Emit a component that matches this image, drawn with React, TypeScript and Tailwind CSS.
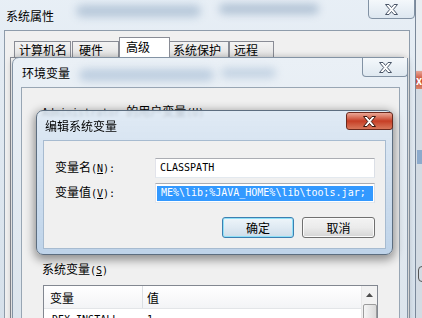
import React from "react";

function CloseX({ stroke = "#4a5668" }: { stroke?: string }) {
  return (
    <svg width="13" height="11" viewBox="0 0 13 11">
      <polygon
        points="0.5,0.5 4,0.5 6.5,3.5 9,0.5 12.5,0.5 8.3,5.5 12.5,10.5 9,10.5 6.5,7.5 4,10.5 0.5,10.5 4.7,5.5"
        fill="#ffffff"
        stroke={stroke}
        strokeWidth="1"
        strokeLinejoin="round"
      />
    </svg>
  );
}

export default function App() {
  return (
    <div className="relative w-[422px] h-[318px] overflow-hidden bg-[#dfe5eb] font-['Noto_Sans_CJK_SC',sans-serif] text-[12px] leading-[14px] text-black">
      {/* windows behind, at the right edge */}
      <div className="absolute left-[415px] top-0 w-[7px] h-[70px] bg-[#e9edf1]" />
      <div className="absolute left-[413px] top-[71px] w-[9px] h-[18px] bg-gradient-to-b from-[#e7a595] via-[#c8482f] to-[#d9866c] flex items-center">
        <span className="text-white text-[11px] font-bold leading-[11px] ml-[3px]">x</span>
      </div>
      <div className="absolute left-[415px] top-[89px] w-[7px] h-[229px] bg-[#d3dbe3] border-l border-[#9aa7b4]" />
      <div className="absolute left-[417px] top-[150px] w-[5px] h-[14px] bg-[#6d95c2] opacity-70" />
      <div className="absolute left-[418px] top-[266px] w-[8px] h-[16px] rounded-full border border-[#555]" />

      {/* 系统属性 window */}
      <div className="absolute left-[-2px] top-[-10px] w-[418px] h-[340px] rounded-t-[8px] border border-[#7a8899] bg-gradient-to-b from-[#e8eff6] to-[#d5e0ea] px-[5px] flex flex-col">
        <div className="relative h-[39px] shrink-0 pt-[18px] pl-[2px] flex items-start">
          <span>系统属性</span>
          <div className="absolute left-[72px] top-[14px] w-[125px] h-[12px] rounded-full bg-[#6f8fb1] opacity-40 blur-[4px]" />
          <div className="absolute left-[215px] top-[13px] w-[100px] h-[10px] rounded-full bg-[#5e7fa3] opacity-40 blur-[4px]" />
          <div className="absolute left-[364px] top-[8px] w-[47px] h-[20px] rounded-b-[4px] rounded-t-[1px] border border-[#8292a4] bg-gradient-to-b from-[#f4f8fb] to-[#dde7f0] flex items-center justify-center">
            <CloseX />
          </div>
        </div>
        <div className="flex-1 border border-[#8e9cab] bg-[#f0f0f0] flex flex-col pt-[6px] pl-[5px]">
          <div className="flex items-end h-[20px] pl-[4px] shrink-0">
            <div className="w-[57px] h-[16px] border border-b-0 border-[#898c95] bg-gradient-to-b from-[#f3f3f3] to-[#e2e2e2] flex items-center pl-[4px]">计算机名</div>
            <div className="ml-[1px] w-[47px] h-[16px] border border-b-0 border-[#898c95] bg-gradient-to-b from-[#f3f3f3] to-[#e2e2e2] flex items-center pl-[6px]">硬件</div>
            <div className="relative z-10 w-[51px] h-[20px] border border-b-0 border-[#898c95] bg-white flex items-start pt-[2px] pl-[6px]">高级</div>
            <div className="ml-[-2px] w-[61px] h-[16px] border border-b-0 border-[#898c95] bg-gradient-to-b from-[#f3f3f3] to-[#e2e2e2] flex items-center pl-[4px]">系统保护</div>
            <div className="w-[45px] h-[16px] border border-b-0 border-[#898c95] bg-gradient-to-b from-[#f3f3f3] to-[#e2e2e2] flex items-center pl-[4px]">远程</div>
          </div>
          <div className="flex-1 mr-[5px] border border-[#898c95] bg-[#fbfbfb]" />
        </div>
      </div>

      {/* 环境变量 window */}
      <div className="absolute left-[12px] top-[57px] w-[396px] h-[280px] rounded-t-[7px] border border-[#8393a4] bg-gradient-to-b from-[#eaf0f6] to-[#dbe4ec] pl-[8px] pr-[7px] flex flex-col shadow-[0_0_6px_rgba(0,0,0,0.25)]">
        <div className="relative h-[29px] shrink-0 pt-[8px] pl-[1px] flex items-start">
          <span>环境变量</span>
          <div className="absolute left-[58px] top-[11px] w-[135px] h-[12px] rounded-full bg-[#7b9cc0] opacity-40 blur-[4px]" />
          <div className="absolute left-[200px] top-[10px] w-[55px] h-[10px] rounded-full bg-[#7b9cc0] opacity-35 blur-[4px]" />
          <div className="absolute left-[341px] top-[0px] w-[46px] h-[19px] rounded-b-[4px] border border-t-0 border-[#8292a4] bg-gradient-to-b from-[#f4f8fb] to-[#dfe8f0] flex items-center justify-center">
            <CloseX />
          </div>
        </div>
        <div className="flex-1 border border-[#98a6b4] bg-[#f0f0f0] pt-[16px] pl-[20px] flex flex-col">
          <div className="whitespace-nowrap">
            <span className="font-['DejaVu_Sans_Mono',monospace] text-[10px]">Administrator </span>
            <span>的用户变量</span>
            <span className="font-['DejaVu_Sans_Mono',monospace] text-[10px]">(U)</span>
          </div>
          <div className="h-[142px] shrink-0" />
          <div className="whitespace-nowrap">
            <span>系统变量</span>
            <span className="font-['DejaVu_Sans_Mono',monospace] text-[10px]">(<u>S</u>)</span>
          </div>
          <div className="mt-[7px] ml-[1px] w-[335px] h-[60px] border border-[#828790] bg-white flex shrink-0">
            <div className="flex-1 flex flex-col">
              <div className="h-[23px] flex border-b border-[#e3e5e8] bg-gradient-to-b from-white to-[#f3f4f6]">
                <div className="w-[99px] pl-[6px] border-r border-[#dcdfe3] flex items-center pt-[2px]">变量</div>
                <div className="pl-[4px] flex items-center pt-[2px]">值</div>
              </div>
              <div className="flex h-[18px] items-end">
                <div className="w-[99px] pl-[8px] font-['DejaVu_Sans_Mono',monospace] text-[10px]">DEX_INSTALL</div>
                <div className="pl-[4px] font-['DejaVu_Sans_Mono',monospace] text-[10px]">1</div>
              </div>
            </div>
            <div className="w-[16px] border-l border-[#e8e8e8] bg-[#f2f2f2] flex flex-col items-center">
              <div className="h-[18px] w-full flex items-center justify-center">
                <svg width="7" height="4" viewBox="0 0 7 4">
                  <polygon points="0,4 3.5,0 7,4" fill="#4d4d4d" />
                </svg>
              </div>
              <div className="w-[14px] h-[40px] border border-[#9c9c9c] rounded-[2px] bg-gradient-to-r from-[#f5f5f5] to-[#dadada]" />
            </div>
          </div>
        </div>
      </div>

      {/* 编辑系统变量 dialog */}
      <div className="absolute left-[36px] top-[110px] w-[357px] h-[145px] rounded-[7px] border border-[#5d6e80] bg-gradient-to-b from-[#dde9f5]/85 via-[#cbdcee]/90 to-[#bed3e9] backdrop-blur-[1.5px] px-[6px] pb-[5px] flex flex-col shadow-[0_3px_10px_2px_rgba(0,0,0,0.4)]">
        <div className="relative h-[29px] shrink-0 pt-[8px] pl-[2px] flex items-start">
          <span>编辑系统变量</span>
          <div className="absolute left-[303px] top-[1px] w-[47px] h-[18px] rounded-[3px] border border-[#6b2a1e] bg-gradient-to-b from-[#eaa796] via-[#c63d24] to-[#d8765a] flex items-center justify-center">
            <CloseX stroke="#3a1810" />
          </div>
        </div>
        <div className="flex-1 border border-[#a7bbd0] bg-[#f0f0f0] flex flex-col pt-[17px] pl-[11px] pr-[10px]">
          <div className="flex items-center">
            <div className="w-[100px] whitespace-nowrap">
              <span>变量名</span>
              <span className="font-['DejaVu_Sans_Mono',monospace] text-[10px]">(<u>N</u>):</span>
            </div>
            <div className="w-[220px] h-[20px] border border-[#abadb3] border-l-[#e2e3ea] border-r-[#dbdfe6] border-b-[#e3e9ef] bg-white flex items-center pl-[4px] font-['DejaVu_Sans_Mono',monospace] text-[10px]">
              CLASSPATH
            </div>
          </div>
          <div className="flex items-center mt-[5px]">
            <div className="w-[100px] whitespace-nowrap">
              <span>变量值</span>
              <span className="font-['DejaVu_Sans_Mono',monospace] text-[10px]">(<u>V</u>):</span>
            </div>
            <div className="w-[220px] h-[20px] border border-[#abadb3] border-l-[#e2e3ea] border-r-[#dbdfe6] border-b-[#e3e9ef] bg-white flex items-center pl-[1px]">
              <div className="w-[216px] h-[15px] bg-[#3399ff] text-white pl-[4px] flex items-center whitespace-nowrap font-['DejaVu_Sans_Mono',monospace] text-[10px]">
                ME%\lib;%JAVA_HOME%\lib\tools.jar;
              </div>
            </div>
          </div>
          <div className="flex justify-end gap-[8px] mt-[14px]">
            <div className="w-[72px] h-[21px] rounded-[3px] border border-[#3c7fb1] shadow-[inset_0_0_0_1px_#8fe0f7] bg-gradient-to-b from-[#eef5fa] via-[#dfeaf3] to-[#cddde9] flex items-center justify-center">确定</div>
            <div className="w-[73px] h-[21px] rounded-[3px] border border-[#707070] shadow-[inset_0_0_0_1px_#fafafa] bg-gradient-to-b from-[#f3f3f3] via-[#ebebeb] to-[#d5d5d5] flex items-center justify-center">取消</div>
          </div>
        </div>
      </div>
    </div>
  );
}
